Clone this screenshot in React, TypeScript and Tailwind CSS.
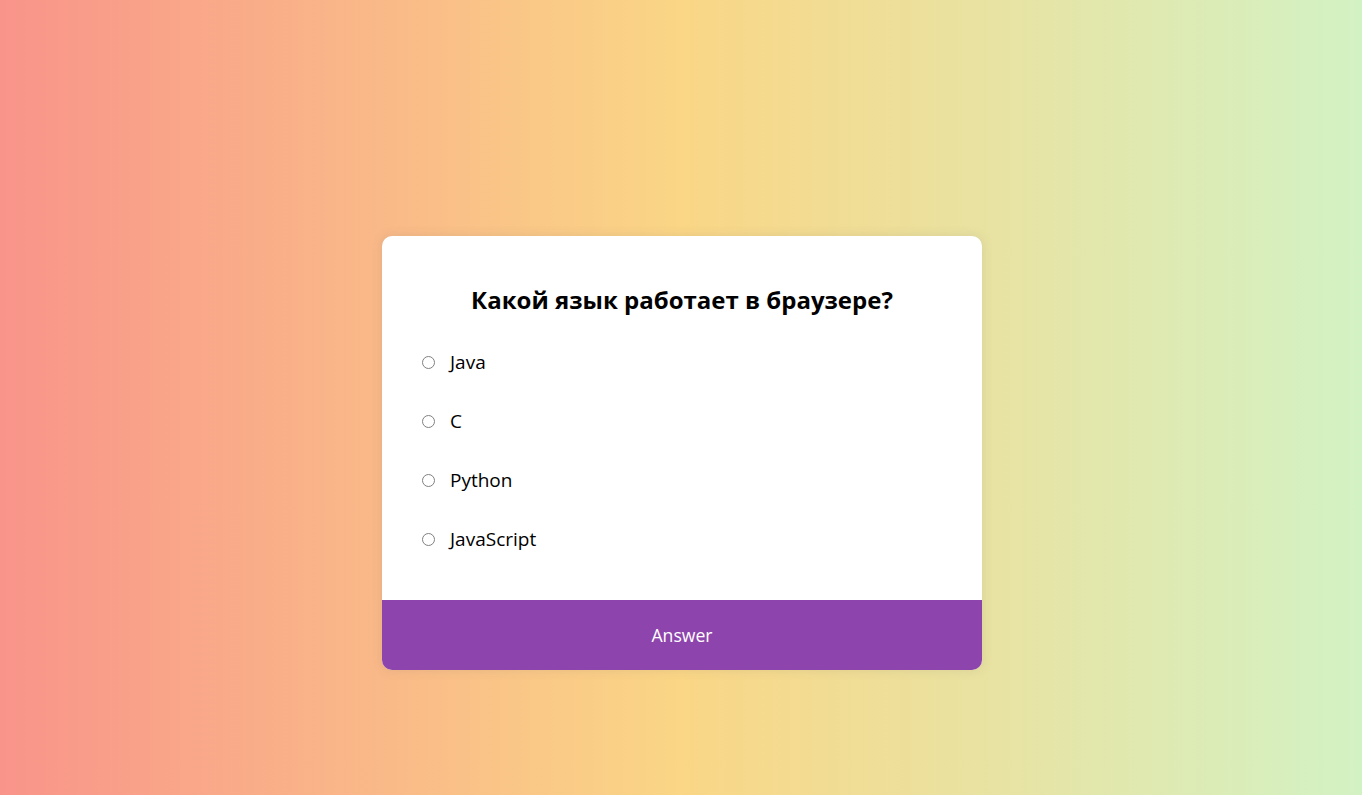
import React, { useState } from "react";

const options = ["Java", "C", "Python", "JavaScript"];

const App = () => {
  const [selected, setSelected] = useState<string | null>(null);

  return (
    <div className="min-h-[795px] w-full bg-[linear-gradient(to_right,#f9948a,#fad686,#d3f2c4)] font-['Open_Sans',sans-serif] flex justify-center pt-[236px] pl-[2px]">
      <div className="w-[600px] h-[434px] bg-white rounded-[10px] overflow-hidden shadow-[0_0_10px_2px_rgba(100,100,100,0.1)] flex flex-col">
        <div className="flex-1 pt-[46px] px-10">
          <h2 className="text-[24px] leading-[36px] font-bold text-center text-black">
            Какой язык работает в браузере?
          </h2>
          <ul className="mt-[30px] flex flex-col gap-[30px]">
            {options.map((opt) => (
              <li key={opt} className="h-[29px] flex items-center">
                <label className="flex items-center cursor-pointer">
                  <input
                    type="radio"
                    name="answer"
                    checked={selected === opt}
                    onChange={() => setSelected(opt)}
                    className="appearance-none w-[13px] h-[13px] rounded-full border border-[#808080] bg-white checked:border-[4px] checked:border-[#0075ff] m-0"
                  />
                  <span className="ml-[15px] text-[19px] leading-[29px] text-black">
                    {opt}
                  </span>
                </label>
              </li>
            ))}
          </ul>
        </div>
        <button className="h-[70px] w-full shrink-0 bg-[#8e44ad] text-white text-[17.6px] hover:bg-[#732d91]">
          Answer
        </button>
      </div>
    </div>
  );
};

export default App;
